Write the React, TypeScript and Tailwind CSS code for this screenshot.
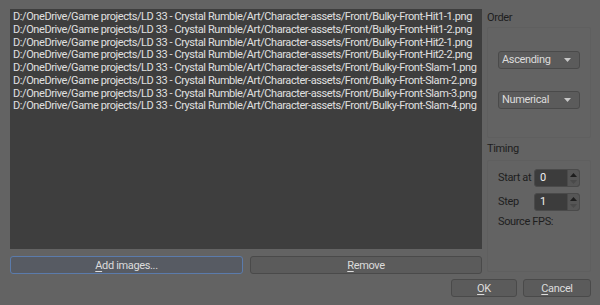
import React from "react";

const files = [
  "Bulky-Front-Hit1-1.png",
  "Bulky-Front-Hit1-2.png",
  "Bulky-Front-Hit2-1.png",
  "Bulky-Front-Hit2-2.png",
  "Bulky-Front-Slam-1.png",
  "Bulky-Front-Slam-2.png",
  "Bulky-Front-Slam-3.png",
  "Bulky-Front-Slam-4.png",
];

const base = "D:/OneDrive/Game projects/LD 33 - Crystal Rumble/Art/Character-assets/Front/";

function Button({ label, accel, focused, className }: { label: string; accel: string; focused?: boolean; className?: string }) {
  const rest = label.slice(accel.length);
  return (
    <button
      className={
        "h-[18px] rounded-[3px] border text-[11px] tracking-[-0.35px] leading-none text-[#dcdcdc] flex items-center justify-center " +
        (focused ? "border-[#5b7bab] bg-[#575b63] " : "border-[#4a4a4a] bg-[#5b5b5b] ") +
        (className ?? "")
      }
    >
      <span>
        <span className="underline underline-offset-2">{accel}</span>
        {rest}
      </span>
    </button>
  );
}

function Combo({ value }: { value: string }) {
  return (
    <div className="h-[18px] w-[82px] rounded-[3px] border border-[#4a4a4a] bg-[#5b5b5b] flex items-center justify-between pl-[3px] pr-[8px] text-[11px] tracking-[-0.35px] text-[#dcdcdc]">
      <span>{value}</span>
      <svg width="7" height="4" viewBox="0 0 7 4">
        <path d="M0 0h7L3.5 4z" fill="#c8c8c8" />
      </svg>
    </div>
  );
}

function Spin({ value }: { value: string }) {
  return (
    <div className="h-[18px] w-[46px] rounded-[3px] border border-[#4a4a4a] bg-[#3c3c3c] flex">
      <div className="flex-1 flex items-center pl-[5px] text-[11px] text-[#f0f0f0]">{value}</div>
      <div className="w-[12px] bg-[#565656] rounded-r-[2px] flex flex-col items-center justify-center gap-[3px] border-l border-[#4a4a4a]">
        <svg width="7" height="4" viewBox="0 0 7 4">
          <path d="M0 4h7L3.5 0z" fill="#1e1e1e" />
        </svg>
        <svg width="7" height="4" viewBox="0 0 7 4">
          <path d="M0 0h7L3.5 4z" fill="#4a4a4a" />
        </svg>
      </div>
    </div>
  );
}

export default function App() {
  return (
    <div className="w-[600px] h-[305px] bg-[#636363] flex flex-col pl-[10px] pr-[9px] pt-[9px] font-['Roboto',sans-serif]">
      <div className="flex gap-[5px]">
        <div className="w-[472px] flex flex-col">
          <div className="h-[240px] bg-[#3e3e3e] pt-[2px] pl-[3px] overflow-hidden">
            {files.map((f) => (
              <div key={f} className="h-[12.75px] text-[11px] tracking-[-0.42px] leading-[12.75px] text-[#e0e0e0] whitespace-nowrap">
                {base + f}
              </div>
            ))}
          </div>
          <div className="flex gap-[7px] mt-[7px]">
            <Button label="Add images..." accel="A" focused className="w-[233px]" />
            <Button label="Remove" accel="R" className="flex-1" />
          </div>
        </div>
        <div className="w-[104px] flex flex-col text-[11px] tracking-[-0.35px] text-[#1e1e1e]">
          <div className="h-[18px] leading-[18px]">Order</div>
          <div className="h-[111px] border border-[#5f5f5f] rounded-[2px] flex flex-col pl-[10px] pt-[23px] gap-[22px]">
            <Combo value="Ascending" />
            <Combo value="Numerical" />
          </div>
          <div className="h-[22px] leading-[22px]">Timing</div>
          <div className="h-[112px] border border-[#5f5f5f] rounded-[2px] flex flex-col pl-[10px] pt-[8px]">
            <div className="flex items-center h-[18px]">
              <span className="w-[36px] whitespace-nowrap">Start at</span>
              <Spin value="0" />
            </div>
            <div className="flex items-center h-[18px] mt-[6px]">
              <span className="w-[36px] whitespace-nowrap">Step</span>
              <Spin value="1" />
            </div>
            <div className="h-[16px] leading-[16px] mt-[3px] whitespace-nowrap">Source FPS:</div>
          </div>
        </div>
      </div>
      <div className="flex justify-end gap-[6px] mt-[5px]">
        <Button label="OK" accel="O" className="w-[66px]" />
        <Button label="Cancel" accel="C" className="w-[68px]" />
      </div>
    </div>
  );
}
